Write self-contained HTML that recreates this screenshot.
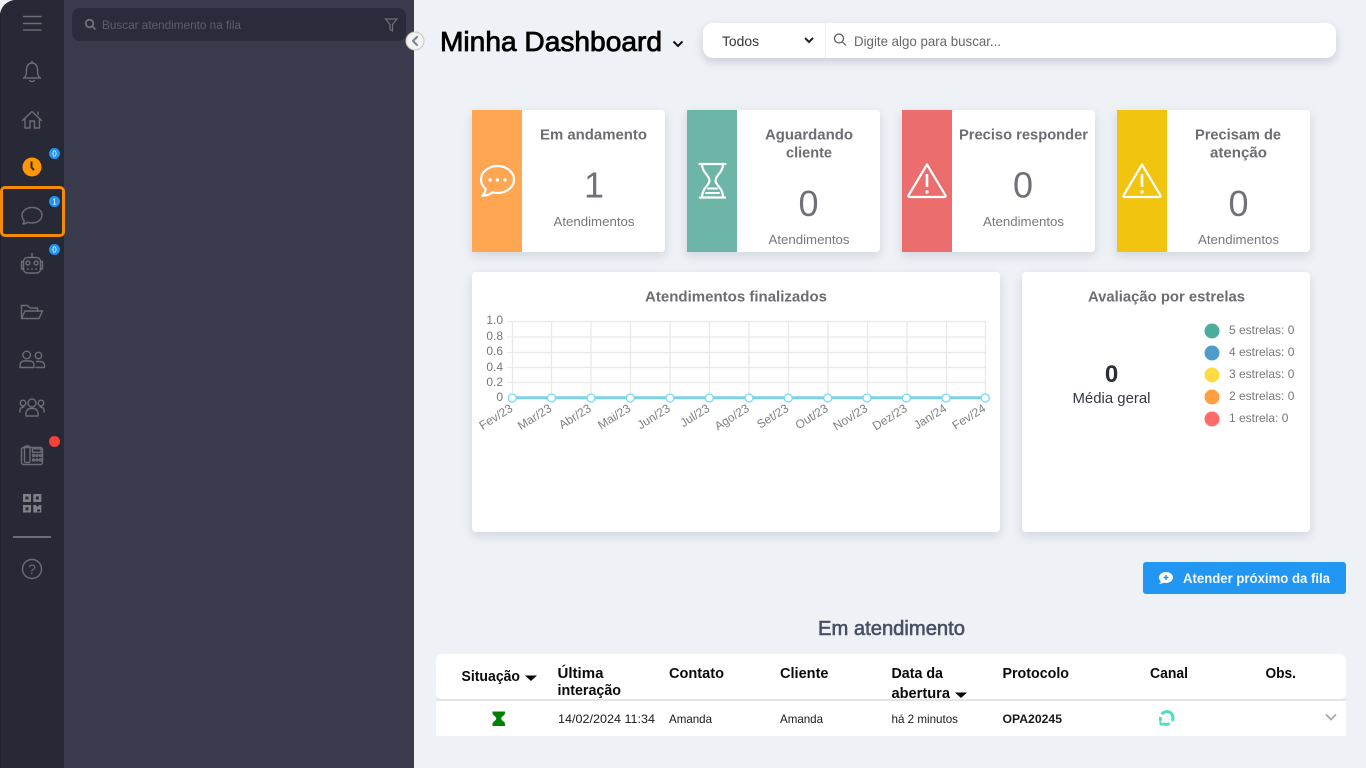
<!DOCTYPE html>
<html lang="pt-BR"><head><meta charset="utf-8"><title>Minha Dashboard</title>
<style>
html,body{margin:0;padding:0;width:1366px;height:768px;overflow:hidden;background:#fff}
div{position:absolute;box-sizing:border-box}
svg{position:absolute;left:0;top:0}
text{font-family:"Liberation Sans",Arial,sans-serif}
.card{background:#fff;border-radius:0 4px 4px 0;box-shadow:0 4px 10px rgba(60,70,100,.16)}
.card i{position:absolute;left:0;top:0;bottom:0;width:50px}
.pan{background:#fff;border-radius:4px;box-shadow:0 4px 10px rgba(60,70,100,.16)}
.h{font-size:14.500px;font-weight:700;fill:#6c6c72}
.n{font-size:36px;fill:#70707a}
.a{font-size:13px;fill:#77777d}
.th{font-size:14.500px;font-weight:700;fill:#0a0a0a}
.td{font-size:12px;fill:#1a1a1a}
.y{font-size:12px;fill:#777}
.x{font-size:12px;fill:#808080}
.l{font-size:12px;fill:#777}
.ic{fill:none;stroke:#6c6d75;stroke-width:1.400;stroke-linecap:round;stroke-linejoin:round}
.wi{fill:none;stroke:#fff;stroke-width:2.200;stroke-linecap:round;stroke-linejoin:round}
</style></head><body>
<div style="left:0;top:0;width:1366px;height:768px;background:#eef1f6"></div>
<div style="left:0;top:0;width:414px;height:768px;background:#393b4c;border-top-left-radius:16px;overflow:hidden">
  <div style="left:0;top:0;width:64px;height:768px;background:#272936;border-left:1px solid #21222d"></div>
</div>
<div style="left:72px;top:8px;width:334px;height:33px;background:#2a2c3b;border-radius:8px"></div>
<div style="left:0;top:186px;width:65px;height:51px;border:3px solid #f58a07;border-radius:5px"></div>

<div style="left:703px;top:23px;width:633px;height:35px;background:#fff;border-radius:10px;box-shadow:0 4px 9px rgba(60,70,100,.2)"></div>
<div style="left:825px;top:23px;width:1px;height:35px;background:#eceef2"></div>

<div class="card" style="left:472px;top:110px;width:193px;height:142px"><i style="background:#ffa652"></i></div>
<div class="card" style="left:687px;top:110px;width:193px;height:142px"><i style="background:#6cb5a7"></i></div>
<div class="card" style="left:902px;top:110px;width:193px;height:142px"><i style="background:#ec6d6d"></i></div>
<div class="card" style="left:1117px;top:110px;width:193px;height:142px"><i style="background:#f1c40f"></i></div>
<div class="pan" style="left:472px;top:272px;width:528px;height:260px"></div>
<div class="pan" style="left:1022px;top:272px;width:288px;height:260px"></div>
<div style="left:1143px;top:562px;width:203px;height:32px;background:#2196f3;border-radius:3px"></div>
<div style="left:436px;top:654px;width:910px;height:45px;background:#fff;border-radius:6px"></div>
<div style="left:436px;top:699px;width:910px;height:2px;background:#e4e4e6"></div>
<div style="left:436px;top:701px;width:910px;height:35px;background:#fff"></div>

<svg width="1366" height="768" viewBox="0 0 1366 768">
<!-- sidebar icons -->
<g class="ic">
 <path d="M23.500 16.500H41M23.500 23.500H41M23.500 30H41"/>
 <path d="M23.500 78c2.500-1.500 3-3.500 3-8.500 0-4 2.500-6.500 5.500-6.500s5.500 2.500 5.500 6.500c0 5 .5 7 3 8.500zM32 63v-1.500M29.500 80.500c1 1.300 4 1.300 5 0"/>
 <path d="M22.500 120.500L32 111.500 41.500 120.500M25 118.500v9.500h5v-7h4.500v7h5v-9.500M38 114.500v-2.500"/>
 <path d="M32 207.500c-5.500 0-10 3.500-10 8 0 2 .9 3.800 2.300 5.100-.2 1.400-.7 2.600-1.500 3.400 1.900-.1 3.700-.8 5-1.800 1.300.5 2.700.8 4.200.8 5.500 0 10-3.500 10-8s-4.500-7.500-10-7.500z"/>
 <rect x="23.500" y="257.500" width="17" height="15.500" rx="4"/><path d="M32 257.500V253.500M23.500 261.500h-2v7.500h2M40.500 261.500h2v7.500h-2"/><circle cx="28" cy="263" r="2"/><circle cx="36" cy="263" r="2"/><path d="M27.500 269h.5M31.700 269h.6M36 269h.5"/>
 <path d="M21.500 318.500v-13h6l2.500 2.500h7.500v3M21.500 318.500l3.500-7.500h17.500l-3.500 7.500z"/>
 <circle cx="26.700" cy="355" r="3.800"/><path d="M20 367.500v-2.500c0-2.500 2-4 4-4h6c2.500 0 4 1.500 4 4v2.500z"/><circle cx="38.500" cy="355.500" r="3.200"/><path d="M36 367.500h8.500v-2c0-2-1.500-4-4-4h-4"/>
 <circle cx="32" cy="403" r="4"/><path d="M26 416v-2.500c0-3 2-5 4.500-5h3c2.500 0 4.500 2 4.500 5v2.500z"/><circle cx="23" cy="403" r="2.800"/><circle cx="41" cy="403" r="2.800"/><path d="M20 412c-.5-2 0-5 4-5M44 412c.5-2 0-5-4-5"/>
 <rect x="21.500" y="447.500" width="21" height="17" rx="2"/><rect x="24.500" y="446" width="5.500" height="16.500" rx="1.500"/><rect x="32.500" y="448.800" width="8.500" height="3.500"/>
 <circle cx="33.500" cy="455.500" r="1"/><circle cx="37" cy="455.500" r="1"/><circle cx="40.500" cy="455.500" r="1"/><circle cx="33.500" cy="460" r="1"/><circle cx="37" cy="460" r="1"/><circle cx="40.500" cy="460" r="1"/>
 <circle cx="32" cy="569" r="9.500"/>
</g>
<g fill="#808188"><rect x="23" y="494" width="8" height="8"/><rect x="33.300" y="494" width="8" height="8"/><rect x="23" y="505" width="8" height="7.500"/><path d="M33.300 505h2.500l1.700 2 1.700-2h2.100v7.500h-8z"/></g>
<g fill="#272936"><rect x="25.500" y="496.500" width="3" height="3"/><rect x="35.800" y="496.500" width="3" height="3"/><rect x="25.500" y="507.300" width="3" height="3"/><rect x="37" y="509.500" width="3" height="2"/></g>
<text x="32" y="574" text-anchor="middle" font-size="14" fill="#6c6d75">?</text>
<rect x="13" y="536" width="38" height="2" fill="#6c6d75"/>
<circle cx="32" cy="167" r="9.500" fill="#ff9800"/><path d="M31.500 161.500v6l2.500 2.500" fill="none" stroke="#272936" stroke-width="2"/>
<g font-size="8" fill="#fff" text-anchor="middle">
<circle cx="54.500" cy="153.500" r="5.500" fill="#2196f3"/><text x="54.500" y="156.500">0</text>
<circle cx="54.500" cy="201.500" r="5.500" fill="#2196f3"/><text x="54.500" y="204.500">1</text>
<circle cx="54.500" cy="249.500" r="5.500" fill="#2196f3"/><text x="54.500" y="252.500">0</text>
</g>
<circle cx="54.500" cy="441.500" r="5.500" fill="#f44336"/>
<!-- search panel -->
<g fill="none" stroke="#6f707a" stroke-width="1.800"><circle cx="89.500" cy="23.500" r="3.800"/><path d="M92.500 26.500l3 3"/></g>
<text x="102" y="29" font-size="12" fill="#5d5f6e" textLength="139" lengthAdjust="spacingAndGlyphs">Buscar atendimento na fila</text>
<path d="M385.500 19h11.500l-4.500 5.500v6.500l-2.500-1.500v-5z" fill="none" stroke="#6f707a" stroke-width="1.200"/>
<circle cx="415" cy="41" r="9" fill="#f2f2f2" stroke="#c9c5bd" stroke-width="1"/>
<path d="M417 37l-4 4 4 4" fill="none" stroke="#7d8696" stroke-width="2.200" stroke-linecap="round" stroke-linejoin="round"/>
<!-- header -->
<text x="440" y="51" font-size="28" fill="#000" stroke="#000" stroke-width=".8" textLength="222" lengthAdjust="spacingAndGlyphs">Minha Dashboard</text>
<path d="M673.500 41.500l4.500 4.500 4.500-4.500" fill="none" stroke="#111" stroke-width="2"/>
<text x="722" y="46" font-size="14" fill="#333" textLength="37" lengthAdjust="spacingAndGlyphs">Todos</text>
<path d="M805 38l4 4 4-4" fill="none" stroke="#222" stroke-width="2"/>
<g fill="none" stroke="#555" stroke-width="1.200"><circle cx="839" cy="38.500" r="4.500"/><path d="M842.500 42l3.500 3.500"/></g>
<text x="854" y="46" font-size="14" fill="#666" textLength="147" lengthAdjust="spacingAndGlyphs">Digite algo para buscar...</text>
<!-- cards -->
<text class="h" x="540" y="139.500" textLength="107" lengthAdjust="spacingAndGlyphs">Em andamento</text>
<text class="h" x="765" y="139.500" textLength="88" lengthAdjust="spacingAndGlyphs">Aguardando</text>
<text class="h" x="786" y="157.500" textLength="46" lengthAdjust="spacingAndGlyphs">cliente</text>
<text class="h" x="959" y="139.500" textLength="129" lengthAdjust="spacingAndGlyphs">Preciso responder</text>
<text class="h" x="1195" y="139.500" textLength="86" lengthAdjust="spacingAndGlyphs">Precisam de</text>
<text class="h" x="1210" y="157.500" textLength="57" lengthAdjust="spacingAndGlyphs">atenção</text>
<g text-anchor="middle">
<text class="n" x="594" y="197.500">1</text><text class="n" x="808.500" y="216">0</text>
<text class="n" x="1023" y="197.500">0</text><text class="n" x="1238.500" y="216">0</text>
</g>
<text class="a" x="553.500" y="226" textLength="81" lengthAdjust="spacingAndGlyphs">Atendimentos</text>
<text class="a" x="768.500" y="244" textLength="81" lengthAdjust="spacingAndGlyphs">Atendimentos</text>
<text class="a" x="983" y="226" textLength="81" lengthAdjust="spacingAndGlyphs">Atendimentos</text>
<text class="a" x="1198" y="244" textLength="81" lengthAdjust="spacingAndGlyphs">Atendimentos</text>
<!-- card icons -->
<path class="wi" d="M497.500 166c-9 0-16.500 6-16.500 13.500 0 3.700 1.800 7 4.700 9.500-.3 2.700-1.500 5.500-3.700 6.500 3.500.5 8-1 10.500-3.200 1.600.4 3.300.7 5 .7 9 0 16.500-6 16.500-13.500S506.500 166 497.500 166z"/>
<g fill="#fff"><circle cx="490" cy="180" r="1.700"/><circle cx="497.500" cy="180" r="1.700"/><circle cx="505" cy="180" r="1.700"/></g>
<path class="wi" d="M699.500 164h26M702 164c0 9 7.500 11 7.500 16.500 0 5-7.500 7-7.500 17M723 164c0 9-7.500 11-7.500 16.500 0 5 7.500 7 7.500 17M700 197.500h25"/>
<path d="M706 193h13M708 188.500h9" stroke="#fff" stroke-width="2" stroke-linecap="round"/>
<path class="wi" d="M927 164.500L908.500 195.500a1 1 0 0 0 .8 1.500h35.400a1 1 0 0 0 .8-1.500z" />
<path d="M927 174v13" stroke="#fff" stroke-width="2.600"/><circle cx="927" cy="192" r="1.700" fill="#fff"/>
<path class="wi" d="M1142 164.500L1123.500 195.500a1 1 0 0 0 .8 1.500h35.400a1 1 0 0 0 .8-1.500z"/>
<path d="M1142 174v13" stroke="#fff" stroke-width="2.600"/><circle cx="1142" cy="192" r="1.700" fill="#fff"/>
<!-- chart -->
<text class="h" x="645" y="301.500" textLength="182" lengthAdjust="spacingAndGlyphs">Atendimentos finalizados</text>
<text class="h" x="1088" y="301.500" textLength="157" lengthAdjust="spacingAndGlyphs">Avaliação por estrelas</text>
<g stroke="#e9e9e9" stroke-width="1.300">
<path d="M507 321.500H986M507 337H986M507 352.500H986M507 367.500H986M507 382.500H986"/>
<path d="M512.500 321V401M551.500 321V401M591 321V401M630.500 321V401M670 321V401M709.500 321V401M749 321V401M788.500 321V401M828 321V401M867.500 321V401M907 321V401M946.500 321V401M985.500 321V401"/>
</g>
<g class="y" text-anchor="end">
<text x="503" y="324">1.0</text><text x="503" y="340">0.8</text><text x="503" y="355">0.6</text><text x="503" y="371">0.4</text><text x="503" y="386">0.2</text><text x="503" y="401">0</text>
</g>
<path d="M512 397.800H985" stroke="#7ed0e8" stroke-width="3"/>
<g fill="#fff" stroke="#6fdcfa" stroke-width="1.300">
<circle cx="512.300" cy="398" r="4"/><circle cx="551.500" cy="398" r="4"/><circle cx="591" cy="398" r="4"/><circle cx="630.300" cy="398" r="4"/><circle cx="670" cy="398" r="4"/><circle cx="709.300" cy="398" r="4"/><circle cx="749" cy="398" r="4"/><circle cx="788.300" cy="398" r="4"/><circle cx="827.700" cy="398" r="4"/><circle cx="867" cy="398" r="4"/><circle cx="906.300" cy="398" r="4"/><circle cx="946" cy="398" r="4"/><circle cx="985.300" cy="398" r="4"/>
</g>
<g class="x" text-anchor="end">
<text transform="translate(513.500 410.500) rotate(-32)">Fev/23</text>
<text transform="translate(552.500 410.500) rotate(-32)">Mar/23</text>
<text transform="translate(592 410.500) rotate(-32)">Abr/23</text>
<text transform="translate(631.500 410.500) rotate(-32)">Mai/23</text>
<text transform="translate(671 410.500) rotate(-32)">Jun/23</text>
<text transform="translate(710.500 410.500) rotate(-32)">Jul/23</text>
<text transform="translate(750 410.500) rotate(-32)">Ago/23</text>
<text transform="translate(789.500 410.500) rotate(-32)">Set/23</text>
<text transform="translate(829 410.500) rotate(-32)">Out/23</text>
<text transform="translate(868.500 410.500) rotate(-32)">Nov/23</text>
<text transform="translate(908 410.500) rotate(-32)">Dez/23</text>
<text transform="translate(947.500 410.500) rotate(-32)">Jan/24</text>
<text transform="translate(986.500 410.500) rotate(-32)">Fev/24</text>
</g>
<!-- stars -->
<text x="1111.500" y="382" text-anchor="middle" font-size="24" font-weight="700" fill="#2a2c3c">0</text>
<text x="1072.500" y="403" font-size="15" fill="#333645" textLength="78" lengthAdjust="spacingAndGlyphs">Média geral</text>
<circle cx="1212" cy="331" r="7.500" fill="#4cae9a"/><circle cx="1212" cy="353" r="7.500" fill="#4f9ccb"/><circle cx="1212" cy="375" r="7.500" fill="#ffdb43"/><circle cx="1212" cy="397" r="7.500" fill="#ff9f40"/><circle cx="1212" cy="419" r="7.500" fill="#ff6b68"/>
<text class="l" x="1229" y="334">5 estrelas: 0</text><text class="l" x="1229" y="356">4 estrelas: 0</text><text class="l" x="1229" y="378">3 estrelas: 0</text><text class="l" x="1229" y="400">2 estrelas: 0</text><text class="l" x="1229" y="422">1 estrela: 0</text>
<!-- button -->
<path d="M1166 572c-4 0-7 2.400-7 5.500 0 1.500.7 2.800 1.800 3.800-.2 1-.8 2-1.800 2.700 1.800 0 3.300-.5 4.500-1.200.8.200 1.600.2 2.500.2 4 0 7-2.500 7-5.500s-3-5.500-7-5.500z" fill="#fff"/>
<path d="M1163.500 577.500h5M1166 575v5" stroke="#2196f3" stroke-width="1.500"/>
<text x="1183" y="583" font-size="14" font-weight="700" fill="#f4f9ff" textLength="147" lengthAdjust="spacingAndGlyphs">Atender próximo da fila</text>
<text x="818" y="635" font-size="20" fill="#4a5064" stroke="#4a5064" stroke-width=".6" textLength="147" lengthAdjust="spacingAndGlyphs">Em atendimento</text>
<!-- table -->
<text class="th" x="461.500" y="681" textLength="58.500" lengthAdjust="spacingAndGlyphs">Situação</text>
<path d="M525 675.500h12l-6 5.500z" fill="#000"/>
<text class="th" x="557.500" y="678" textLength="46" lengthAdjust="spacingAndGlyphs">Última</text>
<text class="th" x="557.500" y="695" textLength="63.500" lengthAdjust="spacingAndGlyphs">interação</text>
<text class="th" x="669" y="678" textLength="55" lengthAdjust="spacingAndGlyphs">Contato</text>
<text class="th" x="780" y="678" textLength="48.500" lengthAdjust="spacingAndGlyphs">Cliente</text>
<text class="th" x="891.500" y="678" textLength="51.500" lengthAdjust="spacingAndGlyphs">Data da</text>
<text class="th" x="891.500" y="698" textLength="58.500" lengthAdjust="spacingAndGlyphs">abertura</text>
<path d="M955 692.500h12l-6 5.500z" fill="#000"/>
<text class="th" x="1002.500" y="678" textLength="66.500" lengthAdjust="spacingAndGlyphs">Protocolo</text>
<text class="th" x="1150" y="678" textLength="38" lengthAdjust="spacingAndGlyphs">Canal</text>
<text class="th" x="1265.500" y="678" textLength="30.500" lengthAdjust="spacingAndGlyphs">Obs.</text>
<path d="M492.500 711.500h12.500v1.500c0 2.500-3.800 3.500-3.800 5.500s3.800 3 3.800 5.500v2h-12.500v-2c0-2.500 3.800-3.500 3.800-5.500s-3.800-3-3.800-5.500z" fill="#008000"/>
<text class="td" x="558" y="723" textLength="97" lengthAdjust="spacingAndGlyphs">14/02/2024 11:34</text>
<text class="td" x="669" y="723" textLength="43" lengthAdjust="spacingAndGlyphs">Amanda</text>
<text class="td" x="780" y="723" textLength="43" lengthAdjust="spacingAndGlyphs">Amanda</text>
<text class="td" x="891.500" y="723" textLength="66.500" lengthAdjust="spacingAndGlyphs">há 2 minutos</text>
<text class="td" x="1002.500" y="723" font-weight="700" fill="#000" textLength="59.500" lengthAdjust="spacingAndGlyphs">OPA20245</text>
<path d="M1161.800 714.300A6 6 0 0 1 1172 721" fill="none" stroke="#4fdcc0" stroke-width="3"/>
<path d="M1169.500 723.400A6 6 0 0 1 1163 723.500M1160.800 721A6 6 0 0 1 1160.500 717" fill="none" stroke="#4fdcc0" stroke-width="3"/>
<path d="M1159.500 720v5.500h5z" fill="#4fdcc0"/>
<path d="M1326 714.500l5 5 5-5" fill="none" stroke="#a8a8ac" stroke-width="1.800"/>
</svg>
</body></html>
